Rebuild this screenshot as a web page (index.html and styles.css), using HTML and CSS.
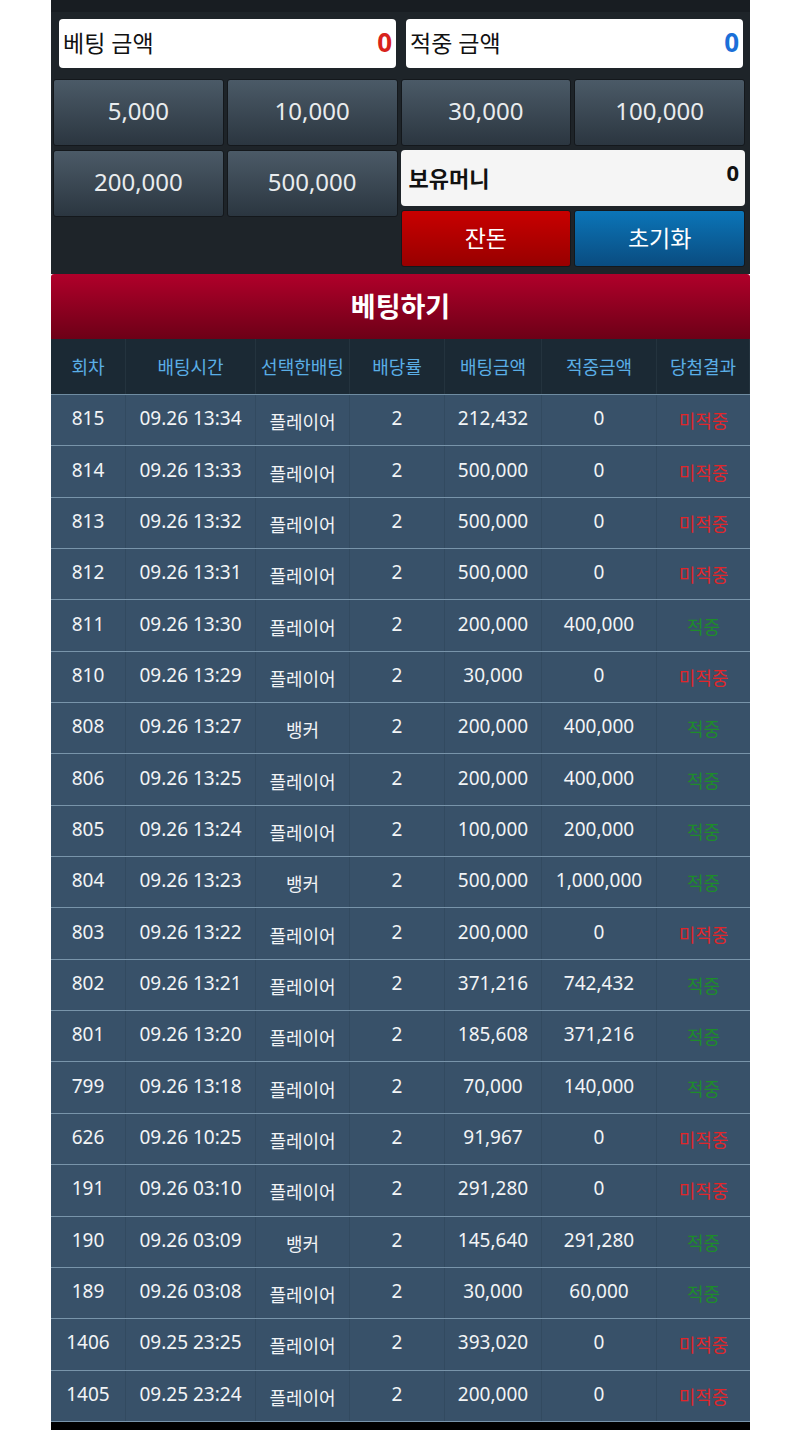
FILE: index.html
```html
<!DOCTYPE html>
<html lang="ko">
<head>
    <meta charset="UTF-8">
    <meta name="viewport" content="width=device-width, initial-scale=1.0">
    <title>베팅하기</title>
    <link rel="stylesheet" href="styles.css">
</head>
<body>
    <div class="wrap">
        <div class="top-strip"></div>

        <div class="panel">
            <div class="amount-row">
                <div class="amount-box">
                    <span>베팅 금액</span>
                    <b class="red">0</b>
                </div>
                <div class="amount-box">
                    <span>적중 금액</span>
                    <b class="blue">0</b>
                </div>
            </div>

            <div class="chip-grid">
                <button class="chip">5,000</button>
                <button class="chip">10,000</button>
                <button class="chip">30,000</button>
                <button class="chip">100,000</button>
                <button class="chip low">200,000</button>
                <button class="chip low">500,000</button>
                <div class="money-box">
                    <span>보유머니</span>
                    <b>0</b>
                </div>
                <button class="action-btn change-btn">잔돈</button>
                <button class="action-btn reset-btn">초기화</button>
            </div>
        </div>

        <div class="bet-title">베팅하기</div>

        <div class="history">
            <div class="row head">
                <div>회차</div>
                <div>배팅시간</div>
                <div>선택한배팅</div>
                <div>배당률</div>
                <div>배팅금액</div>
                <div>적중금액</div>
                <div>당첨결과</div>
            </div>
            <div id="rows"></div>
        </div>
        <div class="bottom-bar"></div>
    </div>

    <script>
        const history = [
            ['815', '09.26 13:34', '플레이어', '212,432', '0', false],
            ['814', '09.26 13:33', '플레이어', '500,000', '0', false],
            ['813', '09.26 13:32', '플레이어', '500,000', '0', false],
            ['812', '09.26 13:31', '플레이어', '500,000', '0', false],
            ['811', '09.26 13:30', '플레이어', '200,000', '400,000', true],
            ['810', '09.26 13:29', '플레이어', '30,000', '0', false],
            ['808', '09.26 13:27', '뱅커', '200,000', '400,000', true],
            ['806', '09.26 13:25', '플레이어', '200,000', '400,000', true],
            ['805', '09.26 13:24', '플레이어', '100,000', '200,000', true],
            ['804', '09.26 13:23', '뱅커', '500,000', '1,000,000', true],
            ['803', '09.26 13:22', '플레이어', '200,000', '0', false],
            ['802', '09.26 13:21', '플레이어', '371,216', '742,432', true],
            ['801', '09.26 13:20', '플레이어', '185,608', '371,216', true],
            ['799', '09.26 13:18', '플레이어', '70,000', '140,000', true],
            ['626', '09.26 10:25', '플레이어', '91,967', '0', false],
            ['191', '09.26 03:10', '플레이어', '291,280', '0', false],
            ['190', '09.26 03:09', '뱅커', '145,640', '291,280', true],
            ['189', '09.26 03:08', '플레이어', '30,000', '60,000', true],
            ['1406', '09.25 23:25', '플레이어', '393,020', '0', false],
            ['1405', '09.25 23:24', '플레이어', '200,000', '0', false]
        ];

        const rows = document.getElementById('rows');
        history.forEach(item => {
            const row = document.createElement('div');
            row.className = 'row';
            row.innerHTML =
                '<div>' + item[0] + '</div>' +
                '<div>' + item[1] + '</div>' +
                '<div class="pick">' + item[2] + '</div>' +
                '<div>2</div>' +
                '<div>' + item[3] + '</div>' +
                '<div>' + item[4] + '</div>' +
                (item[5] ? '<div class="win">적중</div>' : '<div class="lose">미적중</div>');
            rows.appendChild(row);
        });
    </script>
</body>
</html>
```

FILE: styles.css
```css
body {
    margin: 0;
    background: #fff;
    font-family: 'Noto Sans', 'Noto Sans CJK KR', sans-serif;
}

.wrap {
    width: 699px;
    margin-left: 51px;
}

.top-strip {
    height: 12px;
    background: #181d22;
}

.panel {
    background: #1e2429;
    padding: 7px 5px 7px 2px;
}

.amount-row {
    display: flex;
    gap: 10px;
    padding: 0 2px 0 6px;
    margin-bottom: 11px;
}

.amount-box {
    flex: 1;
    height: 49px;
    background: #fff;
    border-radius: 4px;
    display: flex;
    align-items: center;
    justify-content: space-between;
    padding: 0 4px 0 4px;
    font-size: 23px;
    color: #111;
}

.amount-box span {
    padding-bottom: 3px;
}

.amount-box b {
    font-size: 26px;
    padding-bottom: 3px;
}

.red {
    color: #d8231c;
}

.blue {
    color: #1b6fd8;
}

.chip-grid {
    display: grid;
    grid-template-columns: repeat(4, 1fr);
    grid-template-rows: 67px 56px 57px;
    gap: 4px 3px;
}

.chip {
    font-family: inherit;
    background: linear-gradient(#4b5a67, #2b3640);
    border: 1px solid #14181c;
    border-radius: 3px;
    color: #e9ecee;
    font-size: 24px;
    padding: 0 0 4px;
}

.chip.low {
    grid-row: 2 / 4;
    height: 67px;
    align-self: start;
}

.money-box {
    grid-column: 3 / 5;
    background: #f5f5f5;
    border-radius: 4px;
    display: flex;
    align-items: center;
    justify-content: space-between;
    padding: 0 6px 0 8px;
    font-size: 22px;
    color: #111;
}

.money-box span {
    font-weight: bold;
    padding-bottom: 2px;
}

.money-box b {
    font-size: 22px;
    padding-bottom: 12px;
}

.action-btn {
    font-family: inherit;
    border: 1px solid #14181c;
    border-radius: 3px;
    color: #fff;
    font-size: 23px;
    padding: 0 0 3px;
}

.change-btn {
    background: linear-gradient(#c80000, #980000);
}

.reset-btn {
    background: linear-gradient(#0b75b8, #0a4c80);
}

.bet-title {
    height: 65px;
    background: linear-gradient(#b0002a, #6d0017);
    color: #fff;
    font-size: 27px;
    font-weight: bold;
    display: flex;
    align-items: center;
    justify-content: center;
    border-radius: 3px 3px 0 0;
    padding-bottom: 3px;
    box-sizing: border-box;
}

.row {
    display: grid;
    grid-template-columns: 75px 130px 94px 95px 97px 115px 93px;
    height: 51.35px;
    box-sizing: border-box;
    background: #385169;
    border-bottom: 1px solid #7894aa;
    color: #f2f4f6;
    font-size: 19px;
}

.row > div {
    display: flex;
    align-items: center;
    justify-content: center;
    border-right: 1px solid #324a60;
    padding-bottom: 4px;
}

.row > div:last-child {
    border-right: none;
}

.row .pick {
    font-size: 18px;
    padding-top: 2px;
    padding-bottom: 0;
}

.row .win,
.row .lose {
    font-size: 18px;
    padding-bottom: 0;
}

.row.head {
    height: 56px;
    background: #1b2934;
    color: #5aaee6;
    font-size: 18px;
    border-bottom: 1px solid #6f8ca2;
}

.row.head > div {
    border-right: 1px solid #24333e;
    padding-bottom: 2px;
}

.win {
    color: #1e8c2a;
}

.lose {
    color: #e0262b;
}

.bottom-bar {
    height: 8px;
    background: #000;
}
```
